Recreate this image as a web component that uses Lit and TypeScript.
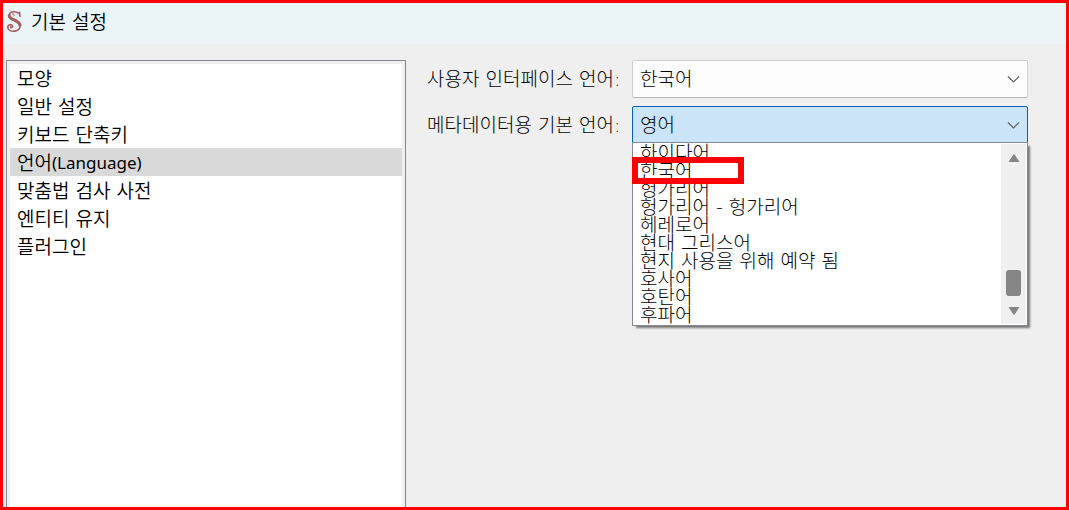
import { LitElement, html, css, svg } from "lit";
import { customElement, property, state } from "lit/decorators.js";
import { classMap } from "lit/directives/class-map.js";

const chevron = svg`<path d="M1 1.5 L6.5 7 L12 1.5" fill="none" stroke="#5c5f63" stroke-width="1.2"/>`;

@customElement("combo-field")
class ComboField extends LitElement {
  @property() label = "";
  @property() value = "";
  @property({ type: Array }) options: string[] = [];
  @property({ type: Boolean, reflect: true }) open = false;

  static styles = css`
    :host {
      display: grid;
      grid-template-columns: 197px 1fr;
      column-gap: 8px;
      align-items: center;
    }
    label {
      font-size: 19px;
      line-height: 36px;
      white-space: nowrap;
    }
    .box {
      position: relative;
      display: grid;
    }
    select {
      appearance: none;
      box-sizing: border-box;
      width: 100%;
      height: 38px;
      margin: 0;
      padding: 0 32px 0 7px;
      border: 1px solid #cfcfcf;
      border-bottom-color: #b8b8b8;
      border-radius: 2px;
      background: #fdfdfd;
      color: #000;
      font: inherit;
      font-size: 19px;
      outline: none;
    }
    :host([open]) select {
      background: #cce4f7;
      border-color: #0560b6;
    }
    .arrow {
      position: absolute;
      right: 8px;
      top: 15px;
      pointer-events: none;
    }
    .popup {
      position: absolute;
      left: 0;
      right: 0;
      top: 36px;
    }
  `;

  render() {
    return html`
      <label for="combo">${this.label}</label>
      <div class="box">
        <select id="combo">
          ${this.options.map((o) => html`<option ?selected=${o === this.value}>${o}</option>`)}
        </select>
        <svg class="arrow" width="13" height="9" viewBox="0 0 13 9" aria-hidden="true">${chevron}</svg>
        ${this.open ? html`<div class="popup"><slot></slot></div>` : ""}
      </div>
    `;
  }
}

@customElement("language-list")
class LanguageList extends LitElement {
  @property({ type: Array }) items: string[] = [];
  @property() marked = "";

  static styles = css`
    :host {
      display: flex;
      padding: 1px;
      border: 1px solid #828790;
      background: #fff;
      box-shadow: 3px 3px 2px -1px #777;
    }
    ul {
      flex: 1;
      margin: 0;
      padding: 0;
      list-style: none;
    }
    li {
      position: relative;
      height: 18px;
      padding-left: 6px;
      font-size: 19px;
      line-height: 18px;
      white-space: nowrap;
    }
    .marker {
      position: absolute;
      z-index: 1;
      left: -2px;
      top: -5px;
      box-sizing: border-box;
      width: 112px;
      height: 27px;
      border: 6px solid #f00;
    }
    .scroll {
      display: flex;
      flex-direction: column;
      align-items: center;
      box-sizing: border-box;
      width: 25px;
      padding: 9px 0 8px;
      background: #f0f0f0;
    }
    .track {
      flex: 1;
      display: flex;
      align-items: flex-end;
      padding-bottom: 10px;
    }
    .thumb {
      width: 15px;
      height: 26px;
      border-radius: 3px;
      background: #858585;
    }
  `;

  render() {
    return html`
      <ul role="listbox" aria-label="언어">
        ${this.items.map(
          (item) => html`<li role="option">${item}${item === this.marked ? html`<span class="marker"></span>` : ""}</li>`
        )}
      </ul>
      <div class="scroll" aria-hidden="true">
        <svg width="12" height="10" viewBox="0 0 12 10">
          <path d="M6 1.5 L10.8 8.5 H1.2 Z" fill="#858585" stroke="#858585" stroke-linejoin="round" />
        </svg>
        <div class="track"><div class="thumb"></div></div>
        <svg width="12" height="10" viewBox="0 0 12 10">
          <path d="M6 8.5 L10.8 1.5 H1.2 Z" fill="#858585" stroke="#858585" stroke-linejoin="round" />
        </svg>
      </div>
    `;
  }
}

@customElement("app-root")
class AppRoot extends LitElement {
  @state() private section = 3;

  private sections = [
    ["모양"],
    ["일반 설정"],
    ["키보드 단축키"],
    ["언어", "(Language)"],
    ["맞춤법 검사 사전"],
    ["엔티티 유지"],
    ["플러그인"],
  ];

  private languages = [
    "하이다어",
    "한국어",
    "헝가리어",
    "헝가리어 - 헝가리어",
    "헤레로어",
    "현대 그리스어",
    "현지 사용을 위해 예약 됨",
    "호사어",
    "호탄어",
    "후파어",
  ];

  static styles = css`
    :host {
      display: flex;
      flex-direction: column;
      box-sizing: border-box;
      height: 100vh;
      overflow: hidden;
      border: 3px solid #f00;
      background: #efefef;
      color: #000;
      font-family: "DejaVu Sans", "Noto Sans CJK KR", sans-serif;
      font-weight: 300;
    }
    header {
      display: flex;
      align-items: center;
      gap: 8px;
      height: 41px;
      padding: 0 3px;
      box-sizing: border-box;
      background: #ebf5f8;
    }
    h1 {
      margin: 0;
      padding-bottom: 4px;
      font-size: 19px;
      font-weight: 350;
      line-height: 28px;
    }
    .logo {
      margin-bottom: 4px;
    }
    main {
      flex: 1;
      display: grid;
      grid-template-columns: 400px 1fr;
      column-gap: 21px;
      padding: 16px 38px 0 3px;
    }
    nav {
      display: flex;
      flex-direction: column;
      padding: 3px 3px 0;
      border: 1px solid #828790;
      border-bottom: 0;
      background: linear-gradient(#fff, #fff) content-box, #f0f0f0;
    }
    nav button {
      display: flex;
      align-items: center;
      box-sizing: border-box;
      height: 28px;
      padding: 2px 7px 0;
      border: 0;
      background: none;
      color: inherit;
      font: inherit;
      font-size: 19px;
      font-weight: 350;
      line-height: 26px;
      text-align: left;
      white-space: pre;
    }
    nav button.on {
      background: #d9d9d9;
    }
    .latin {
      font-family: "Noto Sans", sans-serif;
      font-size: 17px;
      font-weight: 400;
    }
    .fields {
      display: flex;
      flex-direction: column;
      gap: 8px;
    }
  `;

  render() {
    return html`
      <header>
        <svg class="logo" width="17" height="23" viewBox="0 0 17 23" aria-hidden="true">
          <g fill="none" stroke="#a45f60" stroke-linecap="round">
            <path d="M13.5 2.2 L14 6.5 M13.6 4 C11 .8 4.2 1 3.2 5" stroke-width="1.6" />
            <path d="M3.3 5.5 C3.3 10.5 13.4 9.4 14 15.2" stroke-width="3.2" />
            <path d="M14.2 15 C14.3 22.5 3 22.8 1.8 18 C1.2 14.2 6.4 13.6 6.6 16.3 C6.6 17.8 4.8 18 4.6 16.9" stroke-width="1.6" />
            <path d="M6.2 4.2 C7.8 3 9 4.8 7.8 6" stroke-width="1" />
          </g>
        </svg>
        <h1>기본 설정</h1>
      </header>
      <main>
        <nav aria-label="설정">
          ${this.sections.map(
            ([name, latin], i) => html`<button
              type="button"
              class=${classMap({ on: i === this.section })}
              @click=${() => (this.section = i)}
            >${name}${latin ? html`<span class="latin">${latin}</span>` : ""}</button>`
          )}
        </nav>
        <section class="fields">
          <combo-field label="사용자 인터페이스 언어:" value="한국어" .options=${["한국어", "영어"]}></combo-field>
          <combo-field label="메타데이터용 기본 언어:" value="영어" .options=${["영어", ...this.languages]} open>
            <language-list .items=${this.languages} marked="한국어"></language-list>
          </combo-field>
        </section>
      </main>
    `;
  }
}
